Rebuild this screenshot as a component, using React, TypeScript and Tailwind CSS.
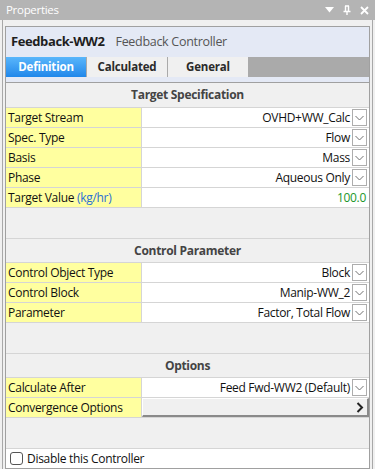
import React from 'react';

type Row = {
    label: React.ReactNode;
    value?: string;
    kind: 'select' | 'number' | 'button';
};

const targetRows: Row[] = [
    { label: 'Target Stream', value: 'OVHD+WW_Calc', kind: 'select' },
    { label: 'Spec. Type', value: 'Flow', kind: 'select' },
    { label: 'Basis', value: 'Mass', kind: 'select' },
    { label: 'Phase', value: 'Aqueous Only', kind: 'select' },
    {
        label: (
            <>
                Target Value <span className="text-[#2a6fd6]">(kg/hr)</span>
            </>
        ),
        value: '100.0',
        kind: 'number',
    },
];

const controlRows: Row[] = [
    { label: 'Control Object Type', value: 'Block', kind: 'select' },
    { label: 'Control Block', value: 'Manip-WW_2', kind: 'select' },
    { label: 'Parameter', value: 'Factor, Total Flow', kind: 'select' },
];

const optionRows: Row[] = [
    { label: 'Calculate After', value: 'Feed Fwd-WW2 (Default)', kind: 'select' },
    { label: 'Convergence Options', kind: 'button' },
];

function DropButton() {
    return (
        <div className="w-[15px] h-[17px] ml-[2px] mr-[2px] border border-[#adadad] bg-white flex items-center justify-center shrink-0">
            <svg width="9" height="6" viewBox="0 0 9 6">
                <path d="M0.5 1 L4.5 5 L8.5 1" fill="none" stroke="#707070" strokeWidth="1" />
            </svg>
        </div>
    );
}

function PropRow({ row }: { row: Row }) {
    return (
        <div className="flex h-[20px] border-b border-[#d5d5d5]">
            <div className="w-[136px] shrink-0 bg-[#ffff9f] border-r border-[#d5d5d5] pl-[2px] flex items-center text-[#111] whitespace-nowrap">
                <span>{row.label}</span>
            </div>
            {row.kind === 'button' ? (
                <div className="flex-1 flex items-center justify-end bg-[#f0f0f0] border-r-2 border-b-2 border-[#8a8a8a] border-t border-l border-t-white border-l-white pr-[3px]">
                    <svg width="8" height="11" viewBox="0 0 8 11">
                        <path d="M1.5 1 L6 5.5 L1.5 10" fill="none" stroke="#222" strokeWidth="2" />
                    </svg>
                </div>
            ) : (
                <div className="flex-1 flex items-center justify-end bg-white">
                    <span className={row.kind === 'number' ? 'text-[#22962a] pr-[3px]' : 'text-[#111]'}>{row.value}</span>
                    {row.kind === 'select' && <DropButton />}
                </div>
            )}
        </div>
    );
}

function SectionHeader({ title, top }: { title: string; top?: boolean }) {
    return (
        <div
            className={
                'h-[25px] flex items-center justify-center font-bold text-[#444] border-b border-[#d5d5d5] ' +
                (top ? '' : 'border-t')
            }
        >
            {title}
        </div>
    );
}

export default function App() {
    return (
        <div
            className="w-[375px] h-[469px] overflow-hidden bg-[#f0f0f0] flex flex-col text-[12px] tracking-[-0.3px]"
            style={{ fontFamily: '"Open Sans", "Noto Sans", sans-serif' }}
        >
            {/* Title bar */}
            <div className="h-[20px] shrink-0 bg-[#b4b4b4] flex items-center justify-between pl-[6px] pr-[6px] text-white text-[11.5px]">
                <span>Properties</span>
                <div className="flex items-center gap-[9px]">
                    <svg width="9" height="6" viewBox="0 0 9 6">
                        <path d="M0 0 H9 L4.5 5.5 Z" fill="#fff" />
                    </svg>
                    <svg width="8" height="10" viewBox="0 0 8 10">
                        <path d="M2 1 H6 M2.5 1 V6 M5.5 1 V6 M0.5 6.5 H7.5 M4 6.5 V10" fill="none" stroke="#fff" strokeWidth="1.4" />
                    </svg>
                    <svg width="9" height="9" viewBox="0 0 9 9">
                        <path d="M1 1 L8 8 M8 1 L1 8" fill="none" stroke="#fff" strokeWidth="1.8" />
                    </svg>
                </div>
            </div>

            {/* Panel body */}
            <div className="flex-1 mx-[2px] border-x border-[#a8a8a8] pt-[6px] px-[2px] flex flex-col min-h-0">
                <div className="flex-1 border border-[#a0a0a0] flex flex-col min-h-0">
                    {/* Header */}
                    <div className="bg-[#e4e9f5] border-b border-[#a0a0a0] pb-[5px]">
                        <div className="h-[30px] flex items-center pl-[5px] gap-[11px]">
                            <span className="font-bold text-[13px] tracking-[-0.4px] text-[#1e1e1e]">Feedback-WW2</span>
                            <span className="text-[12.5px] tracking-[-0.3px] text-[#555]">Feedback Controller</span>
                        </div>
                        <div className="h-[20px] flex bg-[#aaaaaa] font-bold text-[11.5px] tracking-[-0.2px]">
                            <div className="w-[80px] flex items-center justify-center text-white bg-gradient-to-b from-[#59b6fb] to-[#1f87ea]">
                                Definition
                            </div>
                            <div className="w-[80px] ml-[1px] flex items-center justify-center bg-[#f0f0f0] text-[#2a2a2a]">
                                Calculated
                            </div>
                            <div className="w-[80px] ml-[1px] flex items-center justify-center bg-[#f0f0f0] text-[#2a2a2a]">
                                General
                            </div>
                        </div>
                    </div>

                    {/* Content */}
                    <div className="flex-1 flex flex-col bg-[#f0f0f0]">
                        <SectionHeader title="Target Specification" top />
                        {targetRows.map((r, i) => (
                            <PropRow key={i} row={r} />
                        ))}

                        <div className="mt-[30px]">
                            <SectionHeader title="Control Parameter" />
                            {controlRows.map((r, i) => (
                                <PropRow key={i} row={r} />
                            ))}
                        </div>

                        <div className="mt-[30px]">
                            <SectionHeader title="Options" />
                            {optionRows.map((r, i) => (
                                <PropRow key={i} row={r} />
                            ))}
                        </div>

                        <div className="mt-[30px] flex-1 border-t border-[#d5d5d5] bg-white flex items-start pt-[1px] pl-[4px] gap-[4px]">
                            <div className="w-[13px] h-[13px] mt-[2px] rounded-[3px] border border-[#555] bg-white" />
                            <span className="text-[#111]">Disable this Controller</span>
                        </div>
                    </div>
                </div>
            </div>
        </div>
    );
}
